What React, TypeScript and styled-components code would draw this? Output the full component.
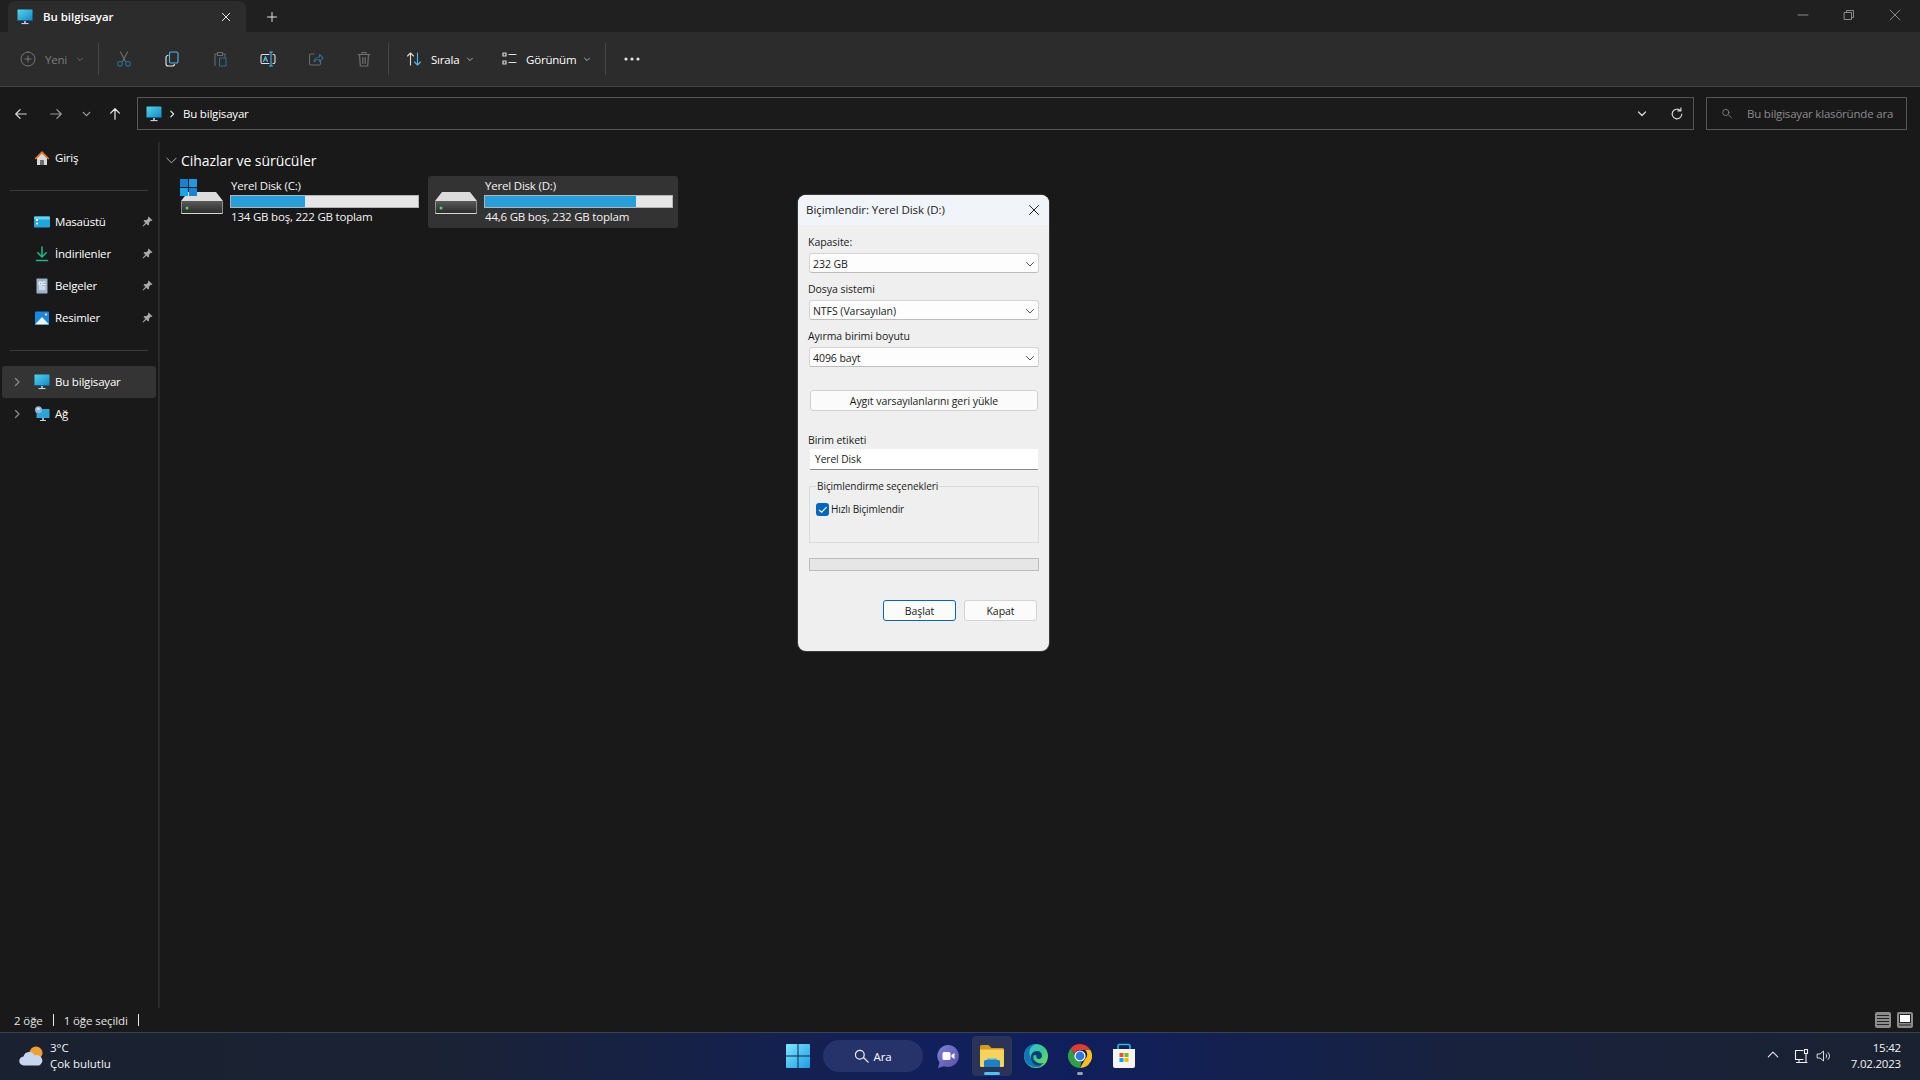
import React from "react";
import styled, { createGlobalStyle } from "styled-components";

const Global = createGlobalStyle`
  html, body { margin: 0; padding: 0; background: #191919; }
  body { font-family: "Open Sans", "Noto Sans", "Liberation Sans", sans-serif; font-size: 11.5px; letter-spacing: -0.2px; color: #fff; }
  * { box-sizing: border-box; }
`;

const Page = styled.div`
  position: relative;
  width: 1920px;
  height: 1080px;
  overflow: hidden;
  display: flex;
  flex-direction: column;
  background: #191919;
`;

const TabBar = styled.div`
  height: 32px;
  background: #202020;
  display: flex;
  align-items: flex-end;
  padding-left: 8px;
`;
const Tab = styled.div`
  width: 238px;
  height: 31px;
  background: #2c2c2c;
  border-radius: 7px 7px 0 0;
  display: flex;
  align-items: center;
  padding-left: 9px;
  gap: 10px;
  font-weight: 600;
  letter-spacing: -0.05px;
`;
const TabTitle = styled.span`
  flex: 1;
`;
const TabClose = styled.span`
  display: flex;
  margin-right: 14px;
`;
const NewTab = styled.span`
  display: flex;
  margin: 0 0 9px 20px;
`;
const WindowControls = styled.div`
  margin-left: auto;
  height: 32px;
  display: flex;
  align-items: center;
  padding-right: 19px;
  gap: 34px;
  padding-bottom: 3px;
`;

const Toolbar = styled.div`
  height: 55px;
  background: #2c2c2c;
  border-bottom: 1px solid #434343;
  display: flex;
  align-items: center;
  padding-left: 20px;
`;
const NewButton = styled.div`
  display: flex;
  align-items: center;
  gap: 9px;
  color: #7c7c7c;
  width: 78px;
`;
const ToolDivider = styled.div`
  width: 1px;
  height: 32px;
  background: #464646;
`;
const ToolIcon = styled.span<{ $first?: boolean }>`
  width: 48px;
  display: flex;
  justify-content: center;
  margin-left: ${(p) => (p.$first ? "1px" : "0")};
`;
const ToolMenu = styled.div<{ $w: number }>`
  width: ${(p) => p.$w}px;
  display: flex;
  align-items: center;
  gap: 9px;
  padding-left: 17px;
  color: #fff;
  font-weight: 500;
  & > svg:last-child {
    margin-left: -2px;
  }
`;

const NavRow = styled.div`
  height: 55px;
  display: flex;
  align-items: flex-start;
  padding-top: 10px;
`;
const NavButtons = styled.div`
  width: 137px;
  height: 33px;
  display: flex;
  align-items: center;
`;
const NavBtn = styled.span<{ $w: number }>`
  width: ${(p) => p.$w}px;
  display: flex;
  justify-content: center;
`;
const AddressBox = styled.div`
  width: 1557px;
  height: 33px;
  border: 1px solid #565656;
  display: flex;
  align-items: center;
  padding-left: 8px;
  background: #1b1b1b;
`;
const Crumb = styled.span`
  margin-left: 6px;
  flex: 1;
  display: flex;
  align-items: center;
  gap: 7px;
`;
const AddressTail = styled.span`
  display: flex;
  align-items: center;
  gap: 23px;
  padding-right: 9px;
`;
const SearchBox = styled.div`
  width: 201px;
  height: 33px;
  margin-left: 12px;
  border: 1px solid #565656;
  display: flex;
  align-items: center;
  padding-left: 15px;
  gap: 14px;
  color: #8b8b8b;
  white-space: nowrap;
`;

const Body = styled.div`
  flex: 1;
  display: flex;
  min-height: 0;
`;
const Sidebar = styled.nav`
  width: 160px;
  border-right: 2px solid #2a2a2a;
  flex: none;
`;
const NavItem = styled.div<{ $active?: boolean }>`
  height: 32px;
  margin: 0 2px;
  padding: 0 3px 1px 8px;
  display: flex;
  align-items: center;
  border-radius: 3px;
  background: ${(p) => (p.$active ? "#343434" : "transparent")};
`;
const ExpandSlot = styled.span`
  width: 14px;
  display: flex;
  justify-content: center;
  margin-right: 10px;
`;
const ItemIcon = styled.span`
  width: 16px;
  height: 16px;
  display: flex;
  margin-right: 5px;
`;
const PinSlot = styled.span`
  margin-left: auto;
  display: flex;
`;
const SideRule = styled.div`
  height: 1px;
  margin: 16px 10px 15px;
  background: #3a3a3a;
`;

const Main = styled.main`
  flex: 1;
  padding: 8px 0 0 6px;
`;
const SectionHead = styled.div`
  height: 20px;
  display: flex;
  align-items: center;
  gap: 4px;
  font-size: 14px;
  letter-spacing: -0.05px;
`;
const Tiles = styled.div`
  display: flex;
  gap: 4px;
  margin: 6px 0 0 8px;
`;
const Tile = styled.div<{ $selected?: boolean }>`
  width: 250px;
  height: 52px;
  display: flex;
  padding: 2px 0 0 6px;
  border-radius: 3px;
  background: ${(p) => (p.$selected ? "#333333" : "transparent")};
`;
const TileText = styled.div`
  margin-left: 6px;
  width: 189px;
`;
const TileLine = styled.div`
  height: 16px;
  line-height: 16px;
  padding-left: 1px;
  white-space: nowrap;
  color: #f4f4f4;
`;
const UsageBar = styled.div`
  height: 13px;
  margin: 1px 0;
  background: #e6e6e6;
  border: 1px solid #b4b4b4;
`;
const UsageFill = styled.div`
  height: 100%;
  background: #26a0da;
`;

const StatusBar = styled.div`
  height: 24px;
  display: flex;
  align-items: center;
  padding-left: 14px;
  color: #e4e4e4;
  letter-spacing: -0.1px;
`;
const StatusSep = styled.span`
  width: 1px;
  height: 12px;
  background: #e8e8e8;
  margin: 0 10px;
`;
const ViewButtons = styled.div`
  margin-left: auto;
  display: flex;
  gap: 6px;
  padding-right: 7px;
`;
const ViewButton = styled.span`
  width: 16px;
  height: 16px;
  background: #8d8d8d;
  border-radius: 2px;
  display: flex;
`;

const Taskbar = styled.footer`
  height: 48px;
  border-top: 1px solid #3c4254;
  padding-bottom: 1px;
  background: linear-gradient(90deg, #1a2231 0%, #1a2233 22%, #12205a 48%, #0f1f5c 56%, #18223d 76%, #1a2231 100%);
  display: grid;
  grid-template-columns: 1fr auto 1fr;
  align-items: center;
`;
const Weather = styled.div`
  display: flex;
  align-items: center;
  padding-left: 19px;
  gap: 6px;
  letter-spacing: -0.05px;
`;
const StackText = styled.div<{ $right?: boolean }>`
  line-height: 16px;
  text-align: ${(p) => (p.$right ? "right" : "left")};
  color: #f2f2f2;
`;
const Dock = styled.div`
  display: flex;
  align-items: center;
  height: 46px;
  padding-left: 12px;
`;
const StartSlot = styled.span`
  width: 24px;
  display: flex;
  margin-right: 13px;
`;
const SearchPill = styled.div`
  width: 100px;
  height: 32px;
  border-radius: 16px;
  background: #25336a;
  display: flex;
  align-items: center;
  justify-content: center;
  gap: 5px;
  font-weight: 500;
  margin-right: 3px;
`;
const DockItem = styled.div<{ $active?: boolean; $dot?: string }>`
  position: relative;
  width: 40px;
  height: 40px;
  margin: 0 2px;
  border-radius: 4px;
  display: flex;
  align-items: center;
  justify-content: center;
  background: ${(p) => (p.$active ? "#2a3358" : "transparent")};
  &::after {
    content: "";
    display: ${(p) => (p.$dot ? "block" : "none")};
    position: absolute;
    bottom: 1px;
    left: 50%;
    transform: translateX(-50%);
    height: 3px;
    border-radius: 2px;
    width: ${(p) => (p.$active ? "16px" : "6px")};
    background: ${(p) => p.$dot};
  }
`;
const Tray = styled.div`
  display: flex;
  justify-content: flex-end;
  align-items: center;
  padding-right: 19px;
`;
const TrayIcon = styled.span<{ $gap: number }>`
  display: flex;
  margin-right: ${(p) => p.$gap}px;
`;

const Dialog = styled.section`
  position: absolute;
  left: 798px;
  top: 195px;
  width: 251px;
  height: 456px;
  border-radius: 8px;
  overflow: hidden;
  background: #efefef;
  color: #1a1a1a;
  font-size: 10.5px;
  letter-spacing: -0.05px;
  box-shadow: 0 0 0 1px #3a3a3a;
`;
const DialogTitle = styled.header`
  height: 30px;
  background: #f1f4f9;
  display: flex;
  align-items: center;
  justify-content: space-between;
  padding: 0 9px 0 8px;
  font-size: 11.5px;
  line-height: 16px;
`;
const DialogBody = styled.div`
  padding: 9px 10px 0 11px;
  display: flex;
  flex-direction: column;
`;
const FieldLabel = styled.label<{ $top?: number }>`
  height: 16px;
  line-height: 16px;
  margin-top: ${(p) => p.$top ?? 0}px;
  margin-bottom: 3px;
  margin-left: -1px;
`;
const SelectBox = styled.div`
  height: 20px;
  border: 1px solid #d4d4d4;
  border-bottom-color: #bdbdbd;
  border-radius: 3px;
  background: #fdfdfd;
  display: flex;
  align-items: center;
  justify-content: space-between;
  padding: 1px 3px 0 3px;
`;
const PushButton = styled.button<{ $primary?: boolean; $w?: number }>`
  height: 21px;
  width: ${(p) => (p.$w ? `${p.$w}px` : "auto")};
  font: inherit;
  letter-spacing: inherit;
  color: #1a1a1a;
  padding: 0;
  border-radius: 3px;
  background: #fbfbfb;
  border: 1px solid ${(p) => (p.$primary ? "#0067c0" : "#d2d2d2")};
`;
const ResetButton = styled(PushButton)`
  margin: 23px 1px 0;
`;
const LabelInput = styled.div`
  height: 21px;
  margin: -2px 1px 0;
  padding: 0 0 1px 5px;
  background: #fff;
  border-bottom: 1px solid #8a8a8a;
  display: flex;
  align-items: center;
  font-size: 10.2px;
`;
const OptionGroup = styled.fieldset`
  height: 65px;
  margin: 8px 0 0;
  padding: 7px 0 0 6px;
  border: 1px solid #dadada;
`;
const OptionLegend = styled.legend`
  padding: 0 1px;
  line-height: 17px;
  font-size: 10px;
`;
const CheckRow = styled.div`
  display: flex;
  align-items: center;
  gap: 2px;
  font-size: 10px;
  letter-spacing: -0.1px;
`;
const CheckMark = styled.span`
  width: 13px;
  height: 13px;
  border-radius: 3px;
  background: #0067c0;
  display: flex;
  align-items: center;
  justify-content: center;
`;
const ProgressTrack = styled.div`
  height: 13px;
  margin-top: 15px;
  background: #e6e6e6;
  border: 1px solid #bcbcbc;
`;
const DialogActions = styled.div`
  display: flex;
  justify-content: flex-end;
  gap: 8px;
  margin-top: 29px;
  padding-right: 2px;
`;

const Line = ({ d, c = "#fff", w = 1.2, s = 16, vb = 16 }: { d: string; c?: string; w?: number; s?: number; vb?: number }) => (
  <svg width={s} height={s} viewBox={`0 0 ${vb} ${vb}`} fill="none" stroke={c} strokeWidth={w} strokeLinecap="round" strokeLinejoin="round">
    <path d={d} />
  </svg>
);
const Duo = ({ a, ca, b, cb }: { a: string; ca: string; b: string; cb: string }) => (
  <svg width={16} height={16} viewBox="0 0 16 16" fill="none" strokeWidth={1.1} strokeLinecap="round" strokeLinejoin="round">
    <path d={a} stroke={ca} />
    <path d={b} stroke={cb} />
  </svg>
);
const Chevron = ({ c = "#cfcfcf", s = 10 }: { c?: string; s?: number }) => <Line d="M2 4l3 3 3-3" c={c} s={s} vb={10} w={1} />;
const Right = ({ c = "#8a8a8a" }: { c?: string }) => <Line d="M3.5 1.5L7 5 3.5 8.5" c={c} s={10} vb={10} w={1.3} />;

const Monitor = ({ s = 16 }: { s?: number }) => (
  <svg width={s} height={s} viewBox="0 0 16 16">
    <defs>
      <linearGradient id="scr" x1="0" y1="0" x2="1" y2="1">
        <stop offset="0" stopColor="#4fd6ea" />
        <stop offset="1" stopColor="#1487c9" />
      </linearGradient>
    </defs>
    <rect x="0.5" y="0.5" width="15" height="11.5" rx="0.8" fill="url(#scr)" />
    <rect x="0.5" y="11" width="15" height="1" fill="#0f5f8f" />
    <rect x="7" y="12" width="2" height="2.2" fill="#9fb3bd" />
    <rect x="4.5" y="14" width="7" height="1.1" fill="#c8d3d9" />
  </svg>
);
const Home = () => (
  <svg width="16" height="16" viewBox="0 0 16 16">
    <path d="M3 8v7h10V8L8 3z" fill="#d9d9d9" />
    <rect x="6" y="10" width="4" height="5" fill="#6f6f6f" />
    <path d="M0.6 8.4L8 1l7.4 7.4-1.2 1L8 3.4 1.8 9.4z" fill="#e8782a" />
  </svg>
);
const DesktopIcon = () => (
  <svg width="16" height="16" viewBox="0 0 16 16">
    <rect x="0" y="2.5" width="16" height="11" rx="1" fill="#22a5dc" />
    <rect x="0" y="2.5" width="16" height="3" rx="1" fill="#63d3ef" />
    <rect x="2" y="5" width="2" height="2" fill="#fff" />
    <rect x="2" y="8.5" width="2" height="2" fill="#d9f3fb" />
  </svg>
);
const Download = () => <Line d="M8 1v9.5M3.8 6.8L8 11l4.2-4.2M2.5 14.5h11" c="#1fb38a" w={1.6} />;
const Docs = () => (
  <svg width="16" height="16" viewBox="0 0 16 16">
    <rect x="2.5" y="0.5" width="11" height="15" rx="0.8" fill="#9fb4cc" />
    <path d="M5 4h3v3H5zM9 4h2.5M9 6.5h2.5M5 9h6.5M5 11h6.5" stroke="#fff" strokeWidth="1" fill="none" />
  </svg>
);
const Pictures = () => (
  <svg width="16" height="16" viewBox="0 0 16 16">
    <rect x="1" y="1.5" width="14" height="13" rx="0.8" fill="#1a88dc" />
    <path d="M1 14.5L8 7l7 7.5z" fill="#eaf4fb" />
    <circle cx="12" cy="4.5" r="1" fill="#fff" />
  </svg>
);
const Network = () => (
  <svg width="16" height="16" viewBox="0 0 16 16">
    <rect x="2.5" y="3" width="13" height="9" rx="0.6" fill="#2aa7d8" />
    <rect x="8" y="12" width="2" height="2" fill="#9fb3bd" />
    <rect x="6" y="14" width="6" height="1" fill="#c8d3d9" />
    <circle cx="4.5" cy="3.8" r="3.5" fill="#8fb8d6" />
    <path d="M2.5 2.5c1.5-1 3-.8 3.6.6-.8 1.3-2.6 1.4-3.6-.6z" fill="#dbe9f2" />
  </svg>
);
const Pin = () => (
  <svg width="11" height="11" viewBox="0 0 11 11">
    <path d="M6.6 0.5l3.9 3.9-1 .6-.9-.2L6.9 7l.1 1.8-.8.8L4.3 7.7 1.2 10.6 0.5 9.9 3.4 6.8 1.5 4.9l.8-.8L4 4.2 6.2 2.5 6 1.5z" fill="#a8a8a8" />
  </svg>
);
const Drive = ({ win }: { win?: boolean }) => (
  <svg width="44" height="40" viewBox="0 0 44 40" style={{ flex: "none" }}>
    <defs>
      <linearGradient id="drv" x1="0" y1="0" x2="0" y2="1">
        <stop offset="0" stopColor="#5a5a5a" />
        <stop offset="1" stopColor="#2c2c2c" />
      </linearGradient>
    </defs>
    <path d="M8 14h28l7 9H1z" fill="#dcdcdc" />
    <rect x="1" y="23" width="42" height="13" rx="1.5" fill="#d8d8d8" />
    <rect x="1.5" y="23" width="41" height="12" rx="1" fill="url(#drv)" />
    <circle cx="7" cy="30" r="1.5" fill="#3fe05a" />
    {win && (
      <g>
        <rect x="0" y="1" width="8" height="8" fill="#1e7fd1" />
        <rect x="9" y="1" width="8" height="8" fill="#1e9be0" />
        <rect x="0" y="10" width="8" height="8" fill="#1aa3e8" />
        <rect x="9" y="10" width="8" height="8" fill="#1584d6" />
      </g>
    )}
  </svg>
);

const ChromeIcon = () => (
  <svg width="24" height="24" viewBox="0 0 24 24">
    <path d="M12 0a12 12 0 0 1 10.4 6H12a6 6 0 0 0-5.6 3.8L2.9 4.2A12 12 0 0 1 12 0z" fill="#e33b2e" />
    <path d="M22.4 6A12 12 0 0 1 12 24l5.2-9a6 6 0 0 0 0-9z" fill="#fbc116" />
    <path d="M12 24A12 12 0 0 1 2.9 4.2l5.2 9A6 6 0 0 0 13.5 18z" fill="#2f9e48" />
    <circle cx="12" cy="12" r="5.6" fill="#fff" />
    <circle cx="12" cy="12" r="4.4" fill="#2b78e4" />
  </svg>
);
const EdgeIcon = () => (
  <svg width="24" height="24" viewBox="0 0 24 24">
    <defs>
      <linearGradient id="edgeA" x1="0" y1="0" x2="1" y2="1">
        <stop offset="0" stopColor="#35c1f1" />
        <stop offset="0.5" stopColor="#36c98f" />
        <stop offset="1" stopColor="#7fe05a" />
      </linearGradient>
    </defs>
    <circle cx="12" cy="12" r="12" fill="url(#edgeA)" />
    <path d="M0 12C0 5 6 0 12 0c-5 2-8 6-6 12 1.500 5 6 7 12 9.500A12 12 0 0 1 0 12z" fill="#0f74b8" />
    <path d="M7 13c0-4 3-6 6-6s5 2 5 5c0 2-2 3-3 3-4 0-1-4-4-4-2 0-2 3-1 5 2 3 7 4 10 3-3 3-8 3-10 1-2-2-3-4-3-7z" fill="#0c3f7a" />
  </svg>
);
const StoreIcon = () => (
  <svg width="24" height="26" viewBox="0 0 24 26">
    <path d="M6 7V3a1.500 1.500 0 0 1 1.500-1.500h9A1.500 1.500 0 0 1 18 3v4" fill="none" stroke="#2bb3e6" strokeWidth="1.6" />
    <path d="M1 6h22v17a2 2 0 0 1-2 2H3a2 2 0 0 1-2-2z" fill="#f5f5f5" />
    <rect x="7.500" y="10" width="4" height="4" fill="#f25022" />
    <rect x="12.500" y="10" width="4" height="4" fill="#7fba00" />
    <rect x="7.500" y="15" width="4" height="4" fill="#00a4ef" />
    <rect x="12.500" y="15" width="4" height="4" fill="#ffb900" />
  </svg>
);
const ChatIcon = () => (
  <svg width="24" height="24" viewBox="0 0 24 24">
    <defs>
      <linearGradient id="chat" x1="0" y1="0" x2="1" y2="1">
        <stop offset="0" stopColor="#7b83d9" />
        <stop offset="1" stopColor="#5a4fa8" />
      </linearGradient>
    </defs>
    <path d="M12 1a11 11 0 1 1-4 21.300L2 24l1.500-5.500A11 11 0 0 1 12 1z" fill="url(#chat)" />
    <rect x="6.500" y="8" width="8" height="8" rx="1.500" fill="#fff" />
    <path d="M15.500 11l3-2v6l-3-2z" fill="#fff" />
  </svg>
);
const FolderIcon = () => (
  <svg width="24" height="22" viewBox="0 0 24 22">
    <path d="M0 1.500A1.500 1.500 0 0 1 1.500 0h7l3 3H22.500A1.500 1.500 0 0 1 24 4.500V8H0z" fill="#d69b12" />
    <path d="M0 4.500h24v16a1.500 1.500 0 0 1-1.500 1.500h-21A1.500 1.500 0 0 1 0 20.500z" fill="#f7d35c" />
    <path d="M4 16.500A1.500 1.500 0 0 1 5.500 15h13a1.500 1.500 0 0 1 1.500 1.500V22H4z" fill="#1c7fc7" />
    <path d="M7 13.500h10V15H7z" fill="#41b2e8" />
  </svg>
);
const WinLogo = () => (
  <svg width="24" height="24" viewBox="0 0 24 24">
    <defs>
      <linearGradient id="win" x1="0" y1="0" x2="1" y2="1">
        <stop offset="0" stopColor="#7fe6ff" />
        <stop offset="1" stopColor="#1b9de2" />
      </linearGradient>
    </defs>
    <path d="M0 1a1 1 0 0 1 1-1h10.500v11.500H0zM12.500 0H23a1 1 0 0 1 1 1v10.500H12.500zM0 12.500h11.500V24H1a1 1 0 0 1-1-1zM12.500 12.500H24V23a1 1 0 0 1-1 1H12.500z" fill="url(#win)" />
  </svg>
);
const WeatherIcon = () => (
  <svg width="25" height="20" viewBox="0 0 25 20">
    <circle cx="17" cy="7" r="6.500" fill="#f0a030" />
    <path d="M5 19.500a4.500 4.500 0 0 1-.5-9A6 6 0 0 1 15.800 9.500 5 5 0 0 1 20 19.500z" fill="#c6d7ef" />
  </svg>
);

const blue = "#4fb7ee";
const dim = "#2f6a8f";

const ComboRow = ({ value }: { value: string }) => (
  <SelectBox>
    {value}
    <Line d="M1.500 3.500L5 7l3.500-3.500" c="#555" s={10} vb={10} w={1} />
  </SelectBox>
);

const sideTop = [
  { icon: <DesktopIcon />, label: "Masaüstü" },
  { icon: <Download />, label: "İndirilenler" },
  { icon: <Docs />, label: "Belgeler" },
  { icon: <Pictures />, label: "Resimler" },
];

export default function App() {
  return (
    <Page>
      <Global />
      <TabBar>
        <Tab>
          <Monitor />
          <TabTitle>Bu bilgisayar</TabTitle>
          <TabClose><Line d="M3 3l10 10M13 3L3 13" s={12} c="#e8e8e8" w={1.3} /></TabClose>
        </Tab>
        <NewTab><Line d="M8 2v12M2 8h12" s={12} c="#e8e8e8" w={1.3} /></NewTab>
        <WindowControls>
          <Line d="M1 6h10" s={12} vb={12} c="#8a8a8a" w={1} />
          <Line d="M1.500 3.500h7v7h-7zM3.500 3.500V1.500h7v7H8.500" s={12} vb={12} c="#8a8a8a" w={1} />
          <Line d="M1 1l10 10M11 1L1 11" s={12} vb={12} c="#8a8a8a" w={1} />
        </WindowControls>
      </TabBar>

      <Toolbar>
        <NewButton>
          <Line d="M8 1a7 7 0 1 1 0 14A7 7 0 0 1 8 1zM8 5v6M5 8h6" c="#787878" s={16} w={1} />
          <span>Yeni</span>
          <Chevron c="#777" s={8} />
        </NewButton>
        <ToolDivider />
        <ToolIcon $first>
          <Duo a="M4.500 1L9.500 10.500M11.500 1L6.500 10.500" ca="#6e6e6e" b="M4 10.500a2.300 2.300 0 1 0 0 4.600 2.300 2.300 0 0 0 0-4.600zM12 10.500a2.300 2.300 0 1 0 0 4.600 2.300 2.300 0 0 0 0-4.600z" cb={dim} />
        </ToolIcon>
        <ToolIcon>
          <Duo a="M4 4.500a2 2 0 0 0-2 2v6.500a2 2 0 0 0 2 2h4.500a2 2 0 0 0 2-1.500" ca="#e8e8e8" b="M5.500 2.500A1.500 1.500 0 0 1 7 1h5.500A1.500 1.500 0 0 1 14 2.500v8a1.500 1.500 0 0 1-1.500 1.500H7a1.500 1.500 0 0 1-1.500-1.500z" cb={blue} />
        </ToolIcon>
        <ToolIcon>
          <Duo a="M3 14.500V3h2M11 3h2v3M5.500 1.500h5v3h-5z" ca="#6a6a6a" b="M7.500 7h6.500v8H7.500z" cb={dim} />
        </ToolIcon>
        <ToolIcon>
          <Duo a="M9 3.500H2.500a1.500 1.500 0 0 0-1.500 1.500v6a1.500 1.500 0 0 0 1.500 1.500H9M13 3.500h.5A1.500 1.500 0 0 1 15 5v6a1.500 1.500 0 0 1-1.500 1.500H13" ca="#e0e0e0" b="M11 1v14M9.500 1h3M9.500 15h3M3.500 10.500L5.500 5.500 7.500 10.500M4.200 9h2.600" cb={blue} />
        </ToolIcon>
        <ToolIcon>
          <Duo a="M6 3H3a1.500 1.500 0 0 0-1.500 1.500v8A1.500 1.500 0 0 0 3 14h8a1.500 1.500 0 0 0 1.500-1.500V10" ca="#6a6a6a" b="M6 11c0-3 2.500-5 5.500-5V3.500L15 7l-3.500 3.500V8.500C9 8.500 7 9.500 6 11z" cb={dim} />
        </ToolIcon>
        <ToolIcon><Line d="M2 3.500h12M6 3.500V1.500h4v2M3.500 3.500l.8 11.500h7.400l.8-11.500M6.800 6.500v6M9.200 6.500v6" c="#6e6e6e" /></ToolIcon>
        <ToolDivider />
        <ToolMenu $w={95}>
          <Duo a="M4.500 14V2M1.500 5l3-3 3 3" ca="#dcdcdc" b="M11.500 2v12M8.500 11l3 3 3-3" cb={blue} />
          <span>Sırala</span>
          <Chevron s={8} />
        </ToolMenu>
        <ToolMenu $w={121}>
          <Line d="M2 2h3v3H2zM2 10h3v3H2zM8 3.500h7M8 11.500h7" c="#dcdcdc" />
          <span>Görünüm</span>
          <Chevron s={8} />
        </ToolMenu>
        <ToolDivider />
        <NavBtn $w={52}>
          <svg width="16" height="4" viewBox="0 0 16 4" fill="#e4e4e4">
            <circle cx="2" cy="2" r="1.600" /><circle cx="8" cy="2" r="1.600" /><circle cx="14" cy="2" r="1.600" />
          </svg>
        </NavBtn>
      </Toolbar>

      <NavRow>
        <NavButtons>
          <NavBtn $w={42}><Line d="M14 8H2M7 3L2 8l5 5" c="#d8d8d8" s={14} w={1.4} /></NavBtn>
          <NavBtn $w={28}><Line d="M2 8h12M9 3l5 5-5 5" c="#9a9a9a" s={14} w={1.4} /></NavBtn>
          <NavBtn $w={32}><Chevron c="#a8a8a8" s={11} /></NavBtn>
          <NavBtn $w={26}><Line d="M8 14V2M3 7l5-5 5 5" c="#e8e8e8" s={14} w={1.4} /></NavBtn>
        </NavButtons>
        <AddressBox>
          <Monitor />
          <Crumb>
            <Line d="M3.500 1.500L7 5 3.500 8.500" s={8} vb={10} c="#e6e6e6" w={1.5} />
            Bu bilgisayar
          </Crumb>
          <AddressTail>
            <Line d="M1.500 3L5 6.500 8.500 3" s={10} vb={10} c="#dcdcdc" w={1.2} />
            <Line d="M13.500 8a5.500 5.500 0 1 1-1.700-4M12.500 1v3.500H9" s={14} c="#d8d8d8" w={1.3} />
          </AddressTail>
        </AddressBox>
        <SearchBox>
          <Line d="M10 6.500a4.500 4.500 0 1 1-9 0 4.500 4.500 0 0 1 9 0zM9.500 10l4.500 4.500" s={11} c="#8a8a8a" w={1.2} />
          Bu bilgisayar klasöründe ara
        </SearchBox>
      </NavRow>

      <Body>
        <Sidebar>
          <NavItem>
            <ExpandSlot />
            <ItemIcon><Home /></ItemIcon>
            Giriş
          </NavItem>
          <SideRule />
          {sideTop.map((it) => (
            <NavItem key={it.label}>
              <ExpandSlot />
              <ItemIcon>{it.icon}</ItemIcon>
              {it.label}
              <PinSlot><Pin /></PinSlot>
            </NavItem>
          ))}
          <SideRule />
          <NavItem $active>
            <ExpandSlot><Right /></ExpandSlot>
            <ItemIcon><Monitor /></ItemIcon>
            Bu bilgisayar
          </NavItem>
          <NavItem>
            <ExpandSlot><Right /></ExpandSlot>
            <ItemIcon><Network /></ItemIcon>
            Ağ
          </NavItem>
        </Sidebar>
        <Main>
          <SectionHead>
            <Line d="M1 3.500L6 8.500l5-5" s={11} vb={12} c="#bdbdbd" w={1} />
            Cihazlar ve sürücüler
          </SectionHead>
          <Tiles>
            <Tile>
              <Drive win />
              <TileText>
                <TileLine>Yerel Disk (C:)</TileLine>
                <UsageBar><UsageFill style={{ width: "39.7%" }} /></UsageBar>
                <TileLine>134 GB boş, 222 GB toplam</TileLine>
              </TileText>
            </Tile>
            <Tile $selected>
              <Drive />
              <TileText>
                <TileLine>Yerel Disk (D:)</TileLine>
                <UsageBar><UsageFill style={{ width: "80.8%" }} /></UsageBar>
                <TileLine>44,6 GB boş, 232 GB toplam</TileLine>
              </TileText>
            </Tile>
          </Tiles>
        </Main>
      </Body>

      <StatusBar>
        2 öğe
        <StatusSep />
        1 öğe seçildi
        <StatusSep />
        <ViewButtons>
          <ViewButton>
            <svg width="16" height="16" viewBox="0 0 16 16" stroke="#222" strokeWidth="1" fill="none"><path d="M2 3.500h12M2 6.500h12M2 9.500h12M2 12.500h12" /></svg>
          </ViewButton>
          <ViewButton>
            <svg width="16" height="16" viewBox="0 0 16 16"><rect x="2.500" y="2.500" width="11" height="8" fill="#fff" stroke="#222" /><path d="M2 13h12" stroke="#222" /></svg>
          </ViewButton>
        </ViewButtons>
      </StatusBar>

      <Taskbar>
        <Weather>
          <WeatherIcon />
          <StackText>
            <div>3°C</div>
            <div>Çok bulutlu</div>
          </StackText>
        </Weather>
        <Dock>
          <StartSlot><WinLogo /></StartSlot>
          <SearchPill>
            <Line d="M10.500 6.500a5 5 0 1 1-10 0 5 5 0 0 1 10 0zM10 10l5 5" s={14} c="#f0f0f0" w={1.4} />
            Ara
          </SearchPill>
          <DockItem><ChatIcon /></DockItem>
          <DockItem $active $dot="#4fc3f7"><FolderIcon /></DockItem>
          <DockItem><EdgeIcon /></DockItem>
          <DockItem $dot="#9aa0ad"><ChromeIcon /></DockItem>
          <DockItem><StoreIcon /></DockItem>
        </Dock>
        <Tray>
          <TrayIcon $gap={15}><Line d="M1.500 8L7 2.500 12.500 8" s={12} vb={14} c="#f0f0f0" w={1.2} /></TrayIcon>
          <TrayIcon $gap={6}>
            <Line d="M9 2.500H1.500v9H9M5 11.500v2.500M2.500 14.500H13M10.500 1.500h3v4h-3zM12 5.500v9" s={16} c="#f0f0f0" w={1.1} />
          </TrayIcon>
          <TrayIcon $gap={19}>
            <Line d="M1.500 6h2.500l3.500-3v10L4 10H1.500zM10 6c1 1 1 3 0 4M12 4.500c2 2 2 5 0 7" s={16} c="#d8d8d8" w={1} />
          </TrayIcon>
          <StackText $right>
            <div>15:42</div>
            <div>7.02.2023</div>
          </StackText>
        </Tray>
      </Taskbar>

      <Dialog>
        <DialogTitle>
          Biçimlendir: Yerel Disk (D:)
          <Line d="M1.500 1.500l9 9M10.500 1.500l-9 9" s={12} vb={12} c="#222" w={1} />
        </DialogTitle>
        <DialogBody>
          <FieldLabel>Kapasite:</FieldLabel>
          <ComboRow value="232 GB" />
          <FieldLabel $top={8}>Dosya sistemi</FieldLabel>
          <ComboRow value="NTFS (Varsayılan)" />
          <FieldLabel $top={8}>Ayırma birimi boyutu</FieldLabel>
          <ComboRow value="4096 bayt" />
          <ResetButton>Aygıt varsayılanlarını geri yükle</ResetButton>
          <FieldLabel $top={21}>Birim etiketi</FieldLabel>
          <LabelInput>Yerel Disk</LabelInput>
          <OptionGroup>
            <OptionLegend>Biçimlendirme seçenekleri</OptionLegend>
            <CheckRow>
              <CheckMark><Line d="M2 5.500L4.200 7.500 8.500 3" s={11} vb={10} c="#fff" w={1} /></CheckMark>
              Hızlı Biçimlendir
            </CheckRow>
          </OptionGroup>
          <ProgressTrack />
          <DialogActions>
            <PushButton $primary $w={73}>Başlat</PushButton>
            <PushButton $w={73}>Kapat</PushButton>
          </DialogActions>
        </DialogBody>
      </Dialog>
    </Page>
  );
}
